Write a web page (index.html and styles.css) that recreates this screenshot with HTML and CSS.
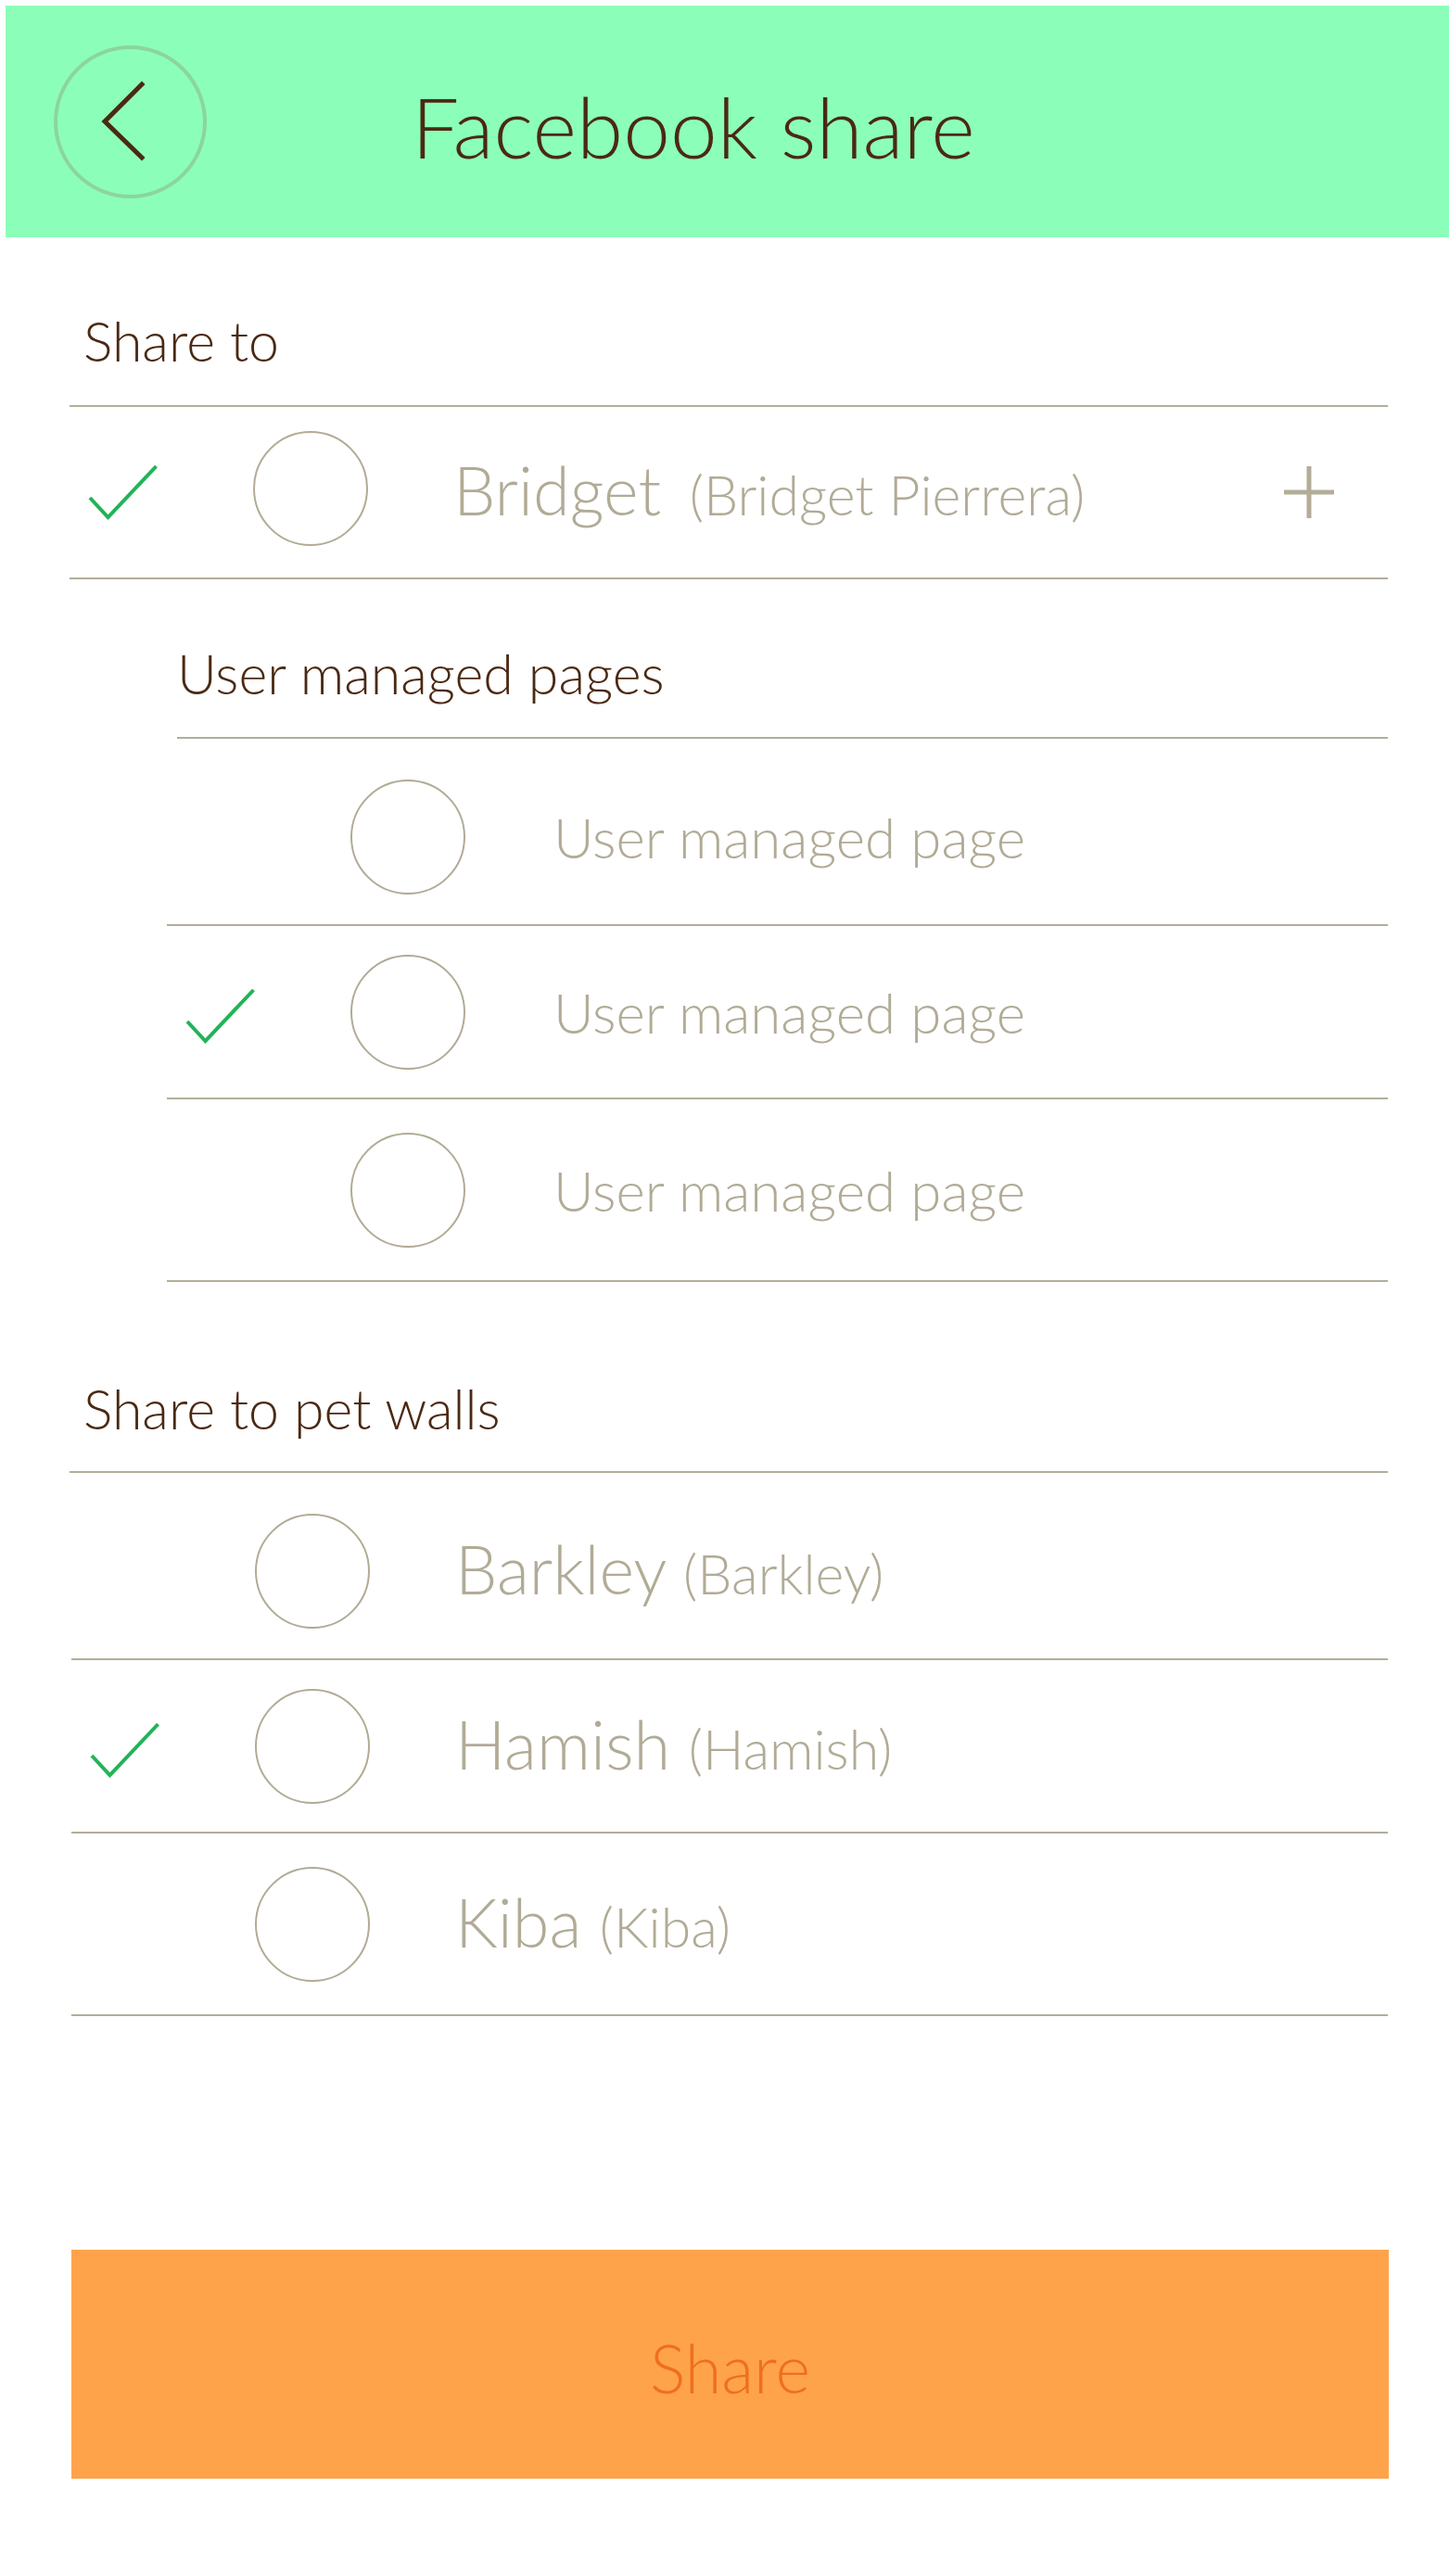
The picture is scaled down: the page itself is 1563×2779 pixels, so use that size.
FILE: index.html
```html
<!DOCTYPE html>
<html lang="en">
<head>
<meta charset="utf-8">
<title>Facebook share</title>
<link rel="stylesheet" href="styles.css">
</head>
<body>
<header class="topbar">
  <button class="back" type="button" aria-label="Back">
    <svg class="chevron" width="165" height="165" viewBox="0 0 165 165"><path d="M95 42 L55 82 L95 121" fill="none" stroke="#4b2912" stroke-width="5" stroke-linecap="square" stroke-linejoin="miter"/></svg>
  </button>
  <h1 class="title">Facebook share</h1>
</header>

<main class="content">
  <section class="section">
    <h2 class="section-head head-first">Share to</h2>
    <div class="row row-single">
      <span class="check-slot"><svg class="check" width="76" height="60" viewBox="0 0 76 60"><path d="M2 36 L21.5 57 L73.5 2" fill="none" stroke="#21b457" stroke-width="4"/></svg></span>
      <span class="radio"></span>
      <span class="name name-main name-bridget">Bridget <span class="alias alias-wide">(Bridget Pierrera)</span></span>
      <svg class="plus" width="54" height="56" viewBox="0 0 54 56"><path d="M27 0 V56 M0 28 H54" fill="none" stroke="#b3ad98" stroke-width="5"/></svg>
    </div>
  </section>

  <section class="section subsection">
    <h2 class="section-head head-sub">User managed pages</h2>
    <div class="sub-list">
      <div class="row row-first">
        <span class="check-slot"></span>
        <span class="radio"></span>
        <span class="name name-page">User managed page</span>
      </div>
      <div class="row row-mid">
        <span class="check-slot"><svg class="check" width="76" height="60" viewBox="0 0 76 60"><path d="M2 36 L21.5 57 L73.5 2" fill="none" stroke="#21b457" stroke-width="4"/></svg></span>
        <span class="radio"></span>
        <span class="name name-page">User managed page</span>
      </div>
      <div class="row row-last">
        <span class="check-slot"></span>
        <span class="radio"></span>
        <span class="name name-page">User managed page</span>
      </div>
    </div>
  </section>

  <section class="section">
    <h2 class="section-head head-pets">Share to pet walls</h2>
    <div class="pet-list">
      <div class="row row-first">
        <span class="check-slot"></span>
        <span class="radio"></span>
        <span class="name name-main">Barkley <span class="alias">(Barkley)</span></span>
      </div>
      <div class="row row-mid">
        <span class="check-slot"><svg class="check" width="76" height="60" viewBox="0 0 76 60"><path d="M2 36 L21.5 57 L73.5 2" fill="none" stroke="#21b457" stroke-width="4"/></svg></span>
        <span class="radio"></span>
        <span class="name name-main">Hamish <span class="alias">(Hamish)</span></span>
      </div>
      <div class="row row-last">
        <span class="check-slot"></span>
        <span class="radio"></span>
        <span class="name name-main">Kiba <span class="alias">(Kiba)</span></span>
      </div>
    </div>
  </section>

  <button class="share-btn" type="button">Share</button>
</main>
</body>
</html>
```

FILE: styles.css
```css
* {
  box-sizing: border-box;
}

html, body {
  margin: 0;
  padding: 0;
  background: #ffffff;
}

body {
  font-family: "Lato", "Open Sans", "Liberation Sans", sans-serif;
  font-weight: 300;
  color: #4b2912;
  width: 1563px;
  min-height: 2779px;
}

/* Header */
.topbar {
  margin: 6px 0 0 6px;
  height: 250px;
  background: #8bffb9;
  display: flex;
  align-items: center;
  padding-left: 52px;
}

.back {
  width: 165px;
  height: 165px;
  border-radius: 50%;
  border: 4px solid #8cd4a0;
  background: transparent;
  padding: 0;
  margin: 0;
  position: relative;
  flex: none;
  cursor: pointer;
}

.chevron {
  position: absolute;
  left: -4px;
  top: -4px;
}

.title {
  margin: 0 0 0 221px;
  padding-top: 8px;
  font-size: 91px;
  line-height: 91px;
  font-weight: 300;
  color: #4b2912;
}

/* Content */
.content {
  margin: 0 66px 0 75px;
}

.section-head {
  margin: 0;
  font-size: 59px;
  line-height: 59px;
  font-weight: 300;
  color: #4b2912;
  border-bottom: 2px solid #b3ae9a;
  padding-left: 15px;
}

.head-first {
  padding-top: 82px;
  padding-bottom: 40px;
}

.head-sub {
  margin-left: 116px;
  padding-left: 0;
  padding-top: 72px;
  padding-bottom: 39px;
}

.head-pets {
  padding-top: 107px;
  padding-bottom: 38px;
}

.sub-list {
  margin-left: 105px;
}

.pet-list {
  margin-left: 2px;
}

.row {
  display: flex;
  align-items: center;
  border-bottom: 2px solid #b3ae9a;
}

.row-single {
  height: 186px;
  padding-bottom: 8px;
}

.row-first {
  height: 202px;
  padding-top: 12px;
}

.row-mid {
  height: 187px;
}

.row-last {
  height: 197px;
}

.check-slot {
  flex: none;
  width: 198px;
  padding-left: 20px;
  display: flex;
  align-items: center;
}

.check {
  display: block;
  margin-top: 8px;
}

.radio {
  flex: none;
  width: 124px;
  height: 124px;
  border-radius: 50%;
  border: 2px solid #b1ab96;
}

.name {
  margin-left: 92px;
  color: #b1ab96;
  font-weight: 300;
  white-space: nowrap;
}

.name-main {
  font-size: 72px;
  line-height: 72px;
}

.name-bridget {
  padding-top: 8px;
}

.name-page {
  margin-left: 95px;
  font-size: 60px;
  line-height: 60px;
}

.alias {
  font-size: 59px;
}

.alias-wide {
  margin-left: 11px;
}

.plus {
  display: block;
  flex: none;
  margin-left: auto;
  margin-right: 58px;
  margin-top: 8px;
}

/* Share button */
.share-btn {
  display: block;
  margin: 252px -1px 0 2px;
  width: calc(100% - 1px);
  height: 247px;
  background: #ffa34a;
  border: none;
  padding: 7px 0 0 0;
  font-family: "Lato", "Open Sans", "Liberation Sans", sans-serif;
  font-weight: 300;
  font-size: 72px;
  line-height: 72px;
  color: #ef6f1e;
  cursor: pointer;
}
```
